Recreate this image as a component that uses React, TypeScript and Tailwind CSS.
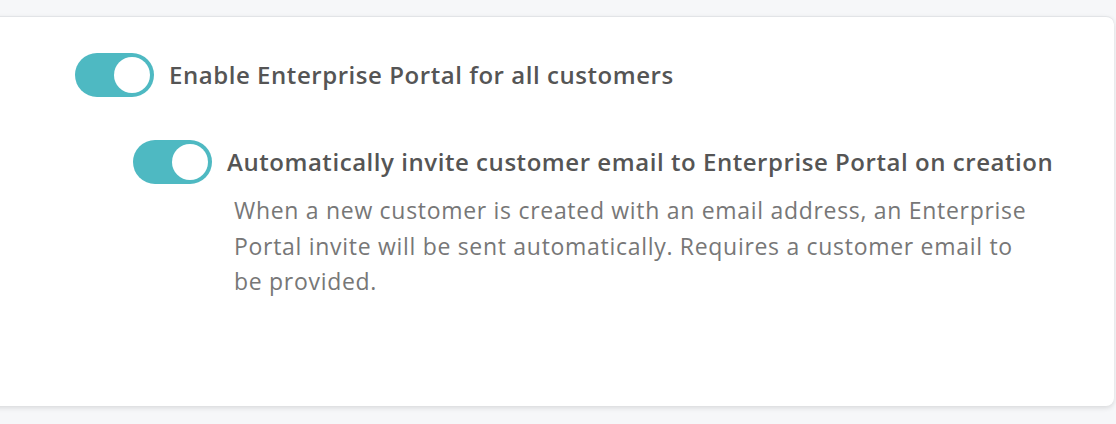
import React from "react";

function Toggle() {
  return (
    <div className="flex h-[44px] w-[79px] shrink-0 items-center justify-end rounded-full bg-[#4eb9c2] pr-[4px]">
      <div className="h-[36px] w-[36px] rounded-full bg-white" />
    </div>
  );
}

export default function App() {
  return (
    <div
      className="h-[424px] w-[1116px] overflow-hidden bg-[#f6f7f9] pt-[16px]"
      style={{ fontFamily: '"Open Sans", "Noto Sans", sans-serif' }}
    >
      <div className="ml-[-20px] h-[390px] w-[1134px] rounded-[8px] border-t border-[#e2e4e7] bg-white pl-[95px] pt-[36px] shadow-[0_2px_5px_rgba(0,0,0,0.12)]">
        <div className="flex items-center gap-[15px]">
          <Toggle />
          <span className="text-[24px] font-semibold leading-[44px] tracking-[0.55px] text-[#555555]">
            Enable Enterprise Portal for all customers
          </span>
        </div>
        <div className="ml-[58px] mt-[43px] flex gap-[15px]">
          <Toggle />
          <div className="flex flex-col">
            <span className="whitespace-nowrap text-[24px] font-semibold leading-[44px] tracking-[0.55px] text-[#555555]">
              Automatically invite customer email to Enterprise Portal on creation
            </span>
            <p className="ml-[7px] mt-[9px] w-[800px] text-[23px] leading-[35.5px] tracking-[0.7px] text-[#777777]">
              When a new customer is created with an email address, an Enterprise Portal invite will be sent automatically. Requires a customer email to be provided.
            </p>
          </div>
        </div>
      </div>
    </div>
  );
}
